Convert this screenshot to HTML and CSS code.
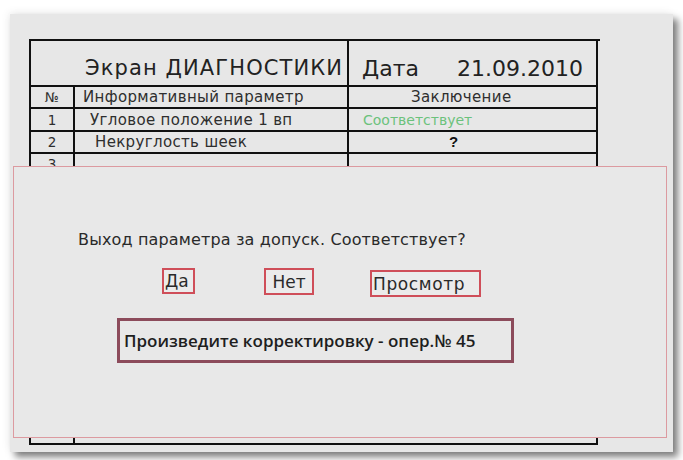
FILE: index.html
```html
<!DOCTYPE html>
<html lang="ru">
<head>
<meta charset="utf-8">
<title>Экран ДИАГНОСТИКИ</title>
<link rel="stylesheet" href="styles.css">
</head>
<body>
<div class="panel">
  <div class="sheet">
    <div class="row head">
      <div class="cell title">Экран ДИАГНОСТИКИ</div>
      <div class="cell date"><span>Дата</span><span>21.09.2010</span></div>
    </div>
    <div class="row">
      <div class="cell num">№</div>
      <div class="cell p1">Информативный параметр</div>
      <div class="cell verdict-head">Заключение</div>
    </div>
    <div class="row">
      <div class="cell num">1</div>
      <div class="cell p2">Угловое положение 1 вп</div>
      <div class="cell ok">Соответствует</div>
    </div>
    <div class="row">
      <div class="cell num">2</div>
      <div class="cell p3">Некруглость шеек</div>
      <div class="cell ask">?</div>
    </div>
    <div class="row">
      <div class="cell num">3</div>
      <div class="cell"></div>
      <div class="cell"></div>
    </div>
    <div class="row"><div class="cell num"></div><div class="cell"></div><div class="cell"></div></div>
    <div class="row"><div class="cell num"></div><div class="cell"></div><div class="cell"></div></div>
    <div class="row"><div class="cell num"></div><div class="cell"></div><div class="cell"></div></div>
    <div class="row"><div class="cell num"></div><div class="cell"></div><div class="cell"></div></div>
    <div class="row"><div class="cell num"></div><div class="cell"></div><div class="cell"></div></div>
    <div class="row"><div class="cell num"></div><div class="cell"></div><div class="cell"></div></div>
    <div class="row"><div class="cell num"></div><div class="cell"></div><div class="cell"></div></div>
    <div class="row"><div class="cell num"></div><div class="cell"></div><div class="cell"></div></div>
    <div class="row"><div class="cell num"></div><div class="cell"></div><div class="cell"></div></div>
    <div class="row"><div class="cell num"></div><div class="cell"></div><div class="cell"></div></div>
    <div class="row"><div class="cell num"></div><div class="cell"></div><div class="cell"></div></div>
    <div class="row tail">
      <div class="cell num"></div>
      <div class="cell wide"></div>
    </div>
  </div>

  <div class="dialog">
    <p class="question">Выход параметра за допуск. Соответствует?</p>
    <div class="actions">
      <button class="btn yes">Да</button>
      <button class="btn no">Нет</button>
      <button class="btn view">Просмотр</button>
    </div>
    <div class="notice">Произведите корректировку - опер.№ 45</div>
  </div>
</div>
</body>
</html>
```
FILE: styles.css
```css
html, body {
  margin: 0;
  padding: 0;
  background: #ffffff;
}

body {
  width: 683px;
  height: 460px;
  overflow: hidden;
  font-family: "DejaVu Sans", "Liberation Sans", sans-serif;
  color: #262626;
}

/* grey card holding the sheet */
.panel {
  position: relative;
  margin: 14px 0 0 10px;
  width: 663px;
  height: 438px;
  background: #e7e7e7;
  overflow: hidden;
  box-shadow: 5px 5px 7px rgba(0, 0, 0, 0.5), -2px -2px 8px rgba(0, 0, 0, 0.06);
}

/* ruled diagnostic sheet */
.sheet {
  margin: 25px 0 0 19px;
  width: 569px;
  border-top: 2px solid #111;
  border-left: 2px solid #111;
}

.row {
  display: grid;
  grid-template-columns: 44px 274px 249px;
  height: 22.375px;
}

.row.head {
  height: 46px;
}

.cell {
  box-sizing: border-box;
  border-right: 2px solid #111;
  border-bottom: 2px solid #111;
  font-size: 15px;
  line-height: 18px;
  letter-spacing: 0.35px;
  white-space: nowrap;
  overflow: hidden;
  display: flex;
  align-items: center;
  color: #2e2e2e;
}

.title {
  grid-column: 1 / 3;
  align-items: flex-end;
  padding: 0 0 6px 54px;
  font-size: 21px;
  line-height: 22px;
  letter-spacing: 1.1px;
  color: #222;
}

.date {
  align-items: flex-end;
  justify-content: space-between;
  padding: 0 13px 4px 13px;
  font-size: 22px;
  line-height: 24px;
  letter-spacing: 0;
  color: #222;
}

.num {
  justify-content: center;
  font-size: 13.5px;
  letter-spacing: 0;
}

.p1 { padding-left: 8px; }
.p2 { padding-left: 15px; }
.p3 { padding-left: 20px; }

.verdict-head { padding-left: 62px; }

.ok {
  padding-left: 14px;
  font-size: 14px;
  color: #6cc27c;
  letter-spacing: 0;
}

.ask {
  padding-left: 100px;
  font-weight: bold;
  font-family: "Liberation Sans", sans-serif;
  font-size: 15px;
  color: #111;
}

.wide {
  grid-column: 2 / 4;
}

/* modal message box laid over the sheet */
.dialog {
  position: absolute;
  left: 3px;
  top: 152px;
  width: 654px;
  height: 272px;
  box-sizing: border-box;
  border: 1px solid #dc9aa0;
  background: #e8e8e8;
  padding: 63px 0 0 64px;
  display: flex;
  flex-direction: column;
  align-items: flex-start;
}

.question {
  margin: 0;
  font-size: 16px;
  line-height: 20px;
  letter-spacing: 0.15px;
  color: #2a2a2a;
}

.actions {
  display: flex;
  align-items: flex-start;
  margin: 18px 0 0 84px;
}

.btn {
  box-sizing: border-box;
  margin: 0;
  padding: 0 0 0 1px;
  height: 26px;
  border: 2px solid #cf4e59;
  background: #ebebeb;
  font-family: "DejaVu Sans", sans-serif;
  font-size: 17px;
  line-height: 22px;
  color: #2a2a2a;
  text-align: left;
}

.yes { width: 33px; }

.no {
  width: 50px;
  margin-left: 69px;
  height: 27px;
  text-align: center;
  padding: 0;
}

.view {
  width: 111px;
  height: 27px;
  margin: 2px 0 0 56px;
  letter-spacing: 0.6px;
}

.notice {
  box-sizing: border-box;
  margin: 21px 0 0 39px;
  width: 397px;
  height: 45px;
  border: 3px solid #8c4b5b;
  padding: 0 0 0 4px;
  display: flex;
  align-items: center;
  font-family: "Open Sans", "Liberation Sans", sans-serif;
  font-weight: 600;
  font-size: 17px;
  color: #1e1e1e;
}
```
